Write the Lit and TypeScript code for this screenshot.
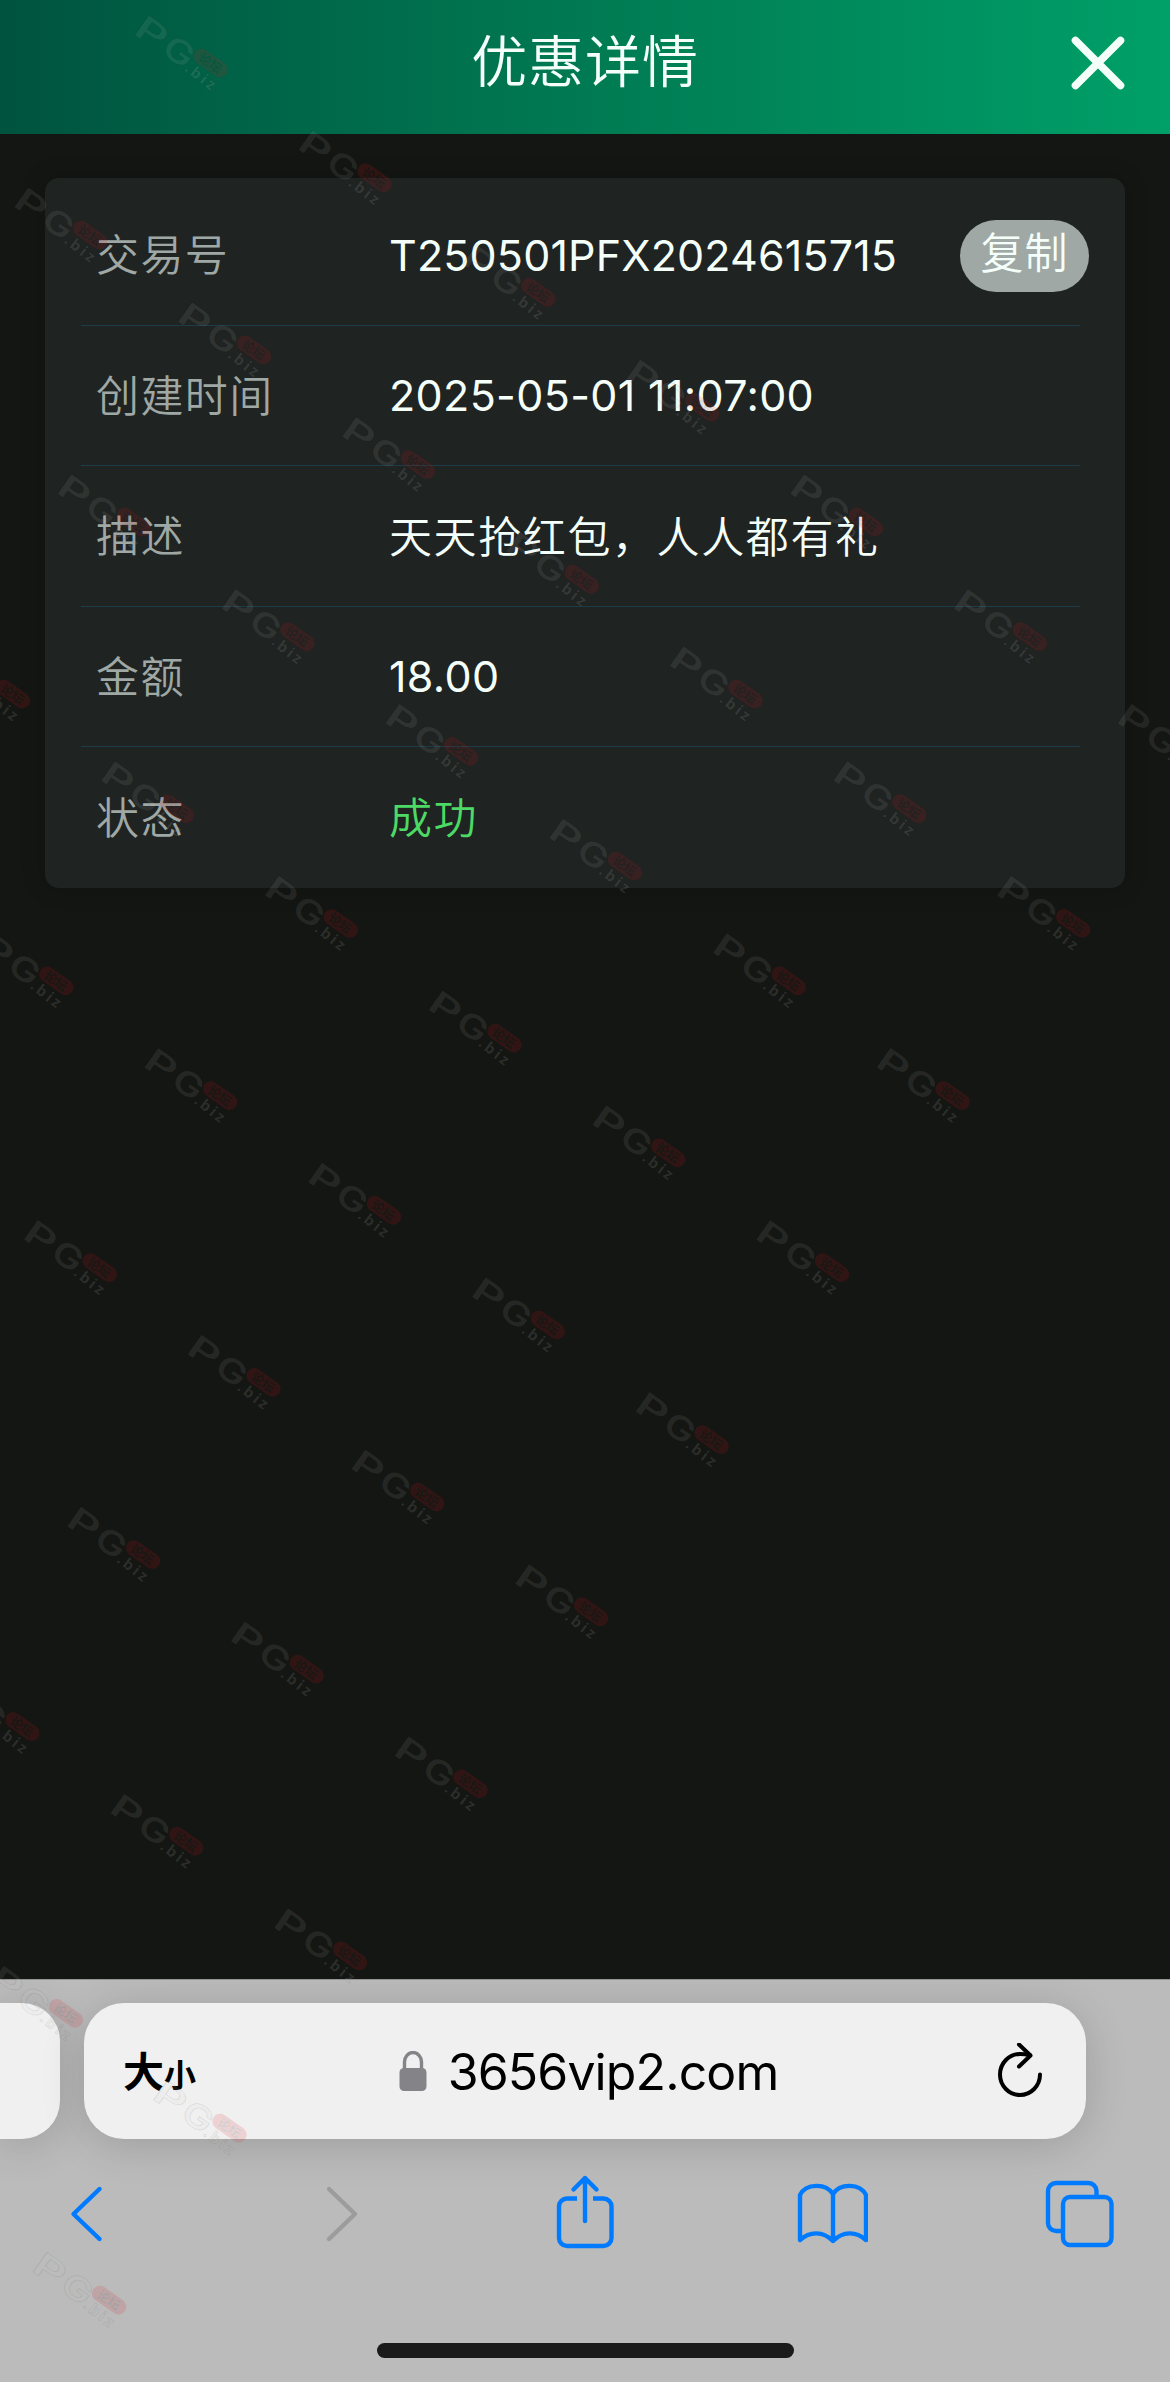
import { LitElement, html, svg, css } from "lit";
import { customElement, property } from "lit/decorators.js";
import { classMap } from "lit/directives/class-map.js";

interface DetailRow {
  label: string;
  value: string;
  kind: "code" | "number" | "text" | "success";
  copyable?: boolean;
}

const ROWS: DetailRow[] = [
  { label: "交易号", value: "T250501PFX2024615715", kind: "code", copyable: true },
  { label: "创建时间", value: "2025-05-01 11:07:00", kind: "number" },
  { label: "描述", value: "天天抢红包，人人都有礼", kind: "text" },
  { label: "金额", value: "18.00", kind: "number" },
  { label: "状态", value: "成功", kind: "success" },
];

/** Header with the page title and a close button. */
@customElement("page-header")
export class PageHeader extends LitElement {
  @property() heading = "";

  static styles = css`
    :host {
      display: grid;
      grid-template-columns: 1fr auto 1fr;
      align-items: center;
      height: 134px;
      padding-bottom: 9px;
      box-sizing: border-box;
      background: linear-gradient(90deg, #00533f 0%, #007a52 50%, #00a069 100%);
      color: #f5fffa;
      font-family: Inter, "Noto Sans CJK SC", sans-serif;
    }
    .title {
      grid-column: 2;
      margin: 0;
      padding-bottom: 2px;
      font-size: 56px;
      font-weight: 350;
      line-height: 80px;
      letter-spacing: 0.9px;
    }
    .close {
      justify-self: end;
      display: block;
      width: 56px;
      height: 56px;
      margin-right: 44px;
    }
  `;

  render() {
    return html`
      <h1 class="title">${this.heading}</h1>
      <svg class="close" viewBox="0 0 56 56" fill="none" stroke="#f5fffa" stroke-width="7.6" stroke-linecap="round">
        <path d="M5.5 5.5 50.5 50.5M50.5 5.5 5.5 50.5" />
      </svg>
    `;
  }
}

/** Card listing the fields of one record. */
@customElement("detail-card")
export class DetailCard extends LitElement {
  @property({ attribute: false }) rows: DetailRow[] = [];

  static styles = css`
    :host {
      display: block;
      height: 710px;
      box-sizing: border-box;
      padding: 7px 45px 0 36px;
      border-radius: 14px;
      background: #1f2322;
      box-shadow: 0 0 24px rgba(0, 0, 0, 0.18);
      font-family: Inter, "Noto Sans CJK SC", sans-serif;
      font-size: 43px;
    }
    .row {
      display: grid;
      grid-template-columns: 293px 1fr auto;
      align-items: center;
      height: 140.5px;
      box-sizing: border-box;
      padding-left: 15px;
      border-bottom: 1px solid #1d3b48;
    }
    .row:last-child {
      border-bottom: none;
    }
    .label {
      color: #9fa8a4;
      font-weight: 350;
      letter-spacing: 1.4px;
      padding-bottom: 5px;
    }
    .value {
      color: #f5fffa;
      font-weight: 380;
      white-space: nowrap;
    }
    .code {
      letter-spacing: 0.15px;
    }
    .number {
      letter-spacing: 0.35px;
    }
    .text,
    .success {
      font-weight: 350;
      letter-spacing: 1.6px;
      padding-bottom: 4px;
    }
    .success {
      color: #4cd964;
    }
    .copy {
      display: flex;
      justify-content: center;
      width: 129px;
      height: 72px;
      margin: 2px -9px 0 0;
      border-radius: 36px;
      background: #9fa8a4;
      color: #f5fffa;
      font-weight: 350;
      line-height: 66px;
      letter-spacing: 1px;
    }
  `;

  render() {
    return this.rows.map(
      (row) => html`
        <div class="row">
          <span class="label">${row.label}</span>
          <span class=${classMap({ value: true, [row.kind]: true })}>${row.value}</span>
          ${row.copyable ? html`<span class="copy">复制</span>` : null}
        </div>
      `
    );
  }
}

/** Mobile browser chrome: address bar, toolbar and home indicator. */
@customElement("browser-bar")
export class BrowserBar extends LitElement {
  @property() url = "";

  static styles = css`
    :host {
      display: flex;
      flex-direction: column;
      height: 403px;
      box-sizing: border-box;
      padding-top: 23px;
      border-top: 1px solid #959595;
      background: #bbbbbb;
      overflow: hidden;
      font-family: Inter, "Noto Sans CJK SC", sans-serif;
    }
    .strip {
      display: flex;
      gap: 24px;
      height: 136px;
    }
    .previous,
    .address {
      background: #f0f0f0;
      box-shadow: 0 6px 44px rgba(0, 0, 0, 0.16);
    }
    .previous {
      width: 60px;
      border-radius: 0 38px 38px 0;
    }
    .address {
      display: grid;
      grid-template-columns: 1fr auto 1fr;
      align-items: center;
      width: 1002px;
      box-sizing: border-box;
      padding: 0 42px 0 39px;
      border-radius: 40px;
      color: #000;
    }
    .sizes {
      display: flex;
      align-items: baseline;
      font-weight: 600;
      line-height: 60px;
      padding-top: 6px;
    }
    .big {
      font-size: 41px;
    }
    .small {
      font-size: 32px;
    }
    .site {
      display: flex;
      align-items: center;
      gap: 21px;
      padding: 2px 0 0 10px;
      font-size: 50px;
      font-weight: 380;
      line-height: 60px;
      letter-spacing: -0.9px;
    }
    .lock {
      display: block;
      width: 28px;
      height: 40px;
      margin-top: -3px;
    }
    .reload {
      justify-self: end;
      display: block;
      width: 48px;
      height: 56px;
    }
    .toolbar {
      display: flex;
      justify-content: space-between;
      padding: 35px 54px 0 50px;
    }
    .tool {
      display: block;
      width: 72px;
      height: 80px;
      fill: none;
      stroke: #007aff;
      stroke-width: 4.4;
      stroke-linecap: round;
      stroke-linejoin: round;
    }
    .disabled {
      stroke: #9c9c9c;
    }
    .butt {
      stroke-linecap: butt;
    }
    .home {
      align-self: center;
      width: 417px;
      height: 15px;
      margin-top: 89px;
      border-radius: 8px;
      background: #1a1a1a;
    }
  `;

  render() {
    return html`
      <div class="strip">
        <div class="previous"></div>
        <div class="address">
          <span class="sizes"><span class="big">大</span><span class="small">小</span></span>
          <span class="site">
            <svg class="lock" viewBox="0 0 28 40">
              <rect x="0.5" y="17" width="27" height="23" rx="4.5" fill="#848488" />
              <path d="M5.5 18V11a8.5 9.5 0 0 1 17 0v7" fill="none" stroke="#848488" stroke-width="3.4" />
            </svg>
            <span>${this.url}</span>
          </span>
          <svg class="reload" viewBox="0 0 48 56" fill="none" stroke="#000" stroke-width="4" stroke-linecap="round" stroke-linejoin="round">
            <path d="M44 31.500a20 20.500 0 1 1-20-20.500q5 0 10 1.300" />
            <path d="M23 1.500 34.500 12.500 23 23.500" />
          </svg>
        </div>
      </div>
      <div class="toolbar">
        <svg class="tool" viewBox="0 0 72 80"><path d="M49.500 15 23.500 40 49.500 65" /></svg>
        <svg class="tool disabled" viewBox="0 0 72 80"><path d="M30 15 56 40 30 65" /></svg>
        <svg class="tool" viewBox="0 0 72 80">
          <path class="butt" d="M30 24.500H20a8 8 0 0 0-8 8V64a8 8 0 0 0 8 8H56.500a8 8 0 0 0 8-8V32.500a8 8 0 0 0-8-8H46" />
          <path d="M38 47V4M26.500 15.500 38 4 49.500 15.500" />
        </svg>
        <svg class="tool" viewBox="0 0 72 80">
          <path d="M4 21C10 9 30 9 37 20 44 9 64 9 70 21V66C60 57 47 57 37 67 27 57 14 57 4 66ZM37 20V67" />
        </svg>
        <svg class="tool" viewBox="0 0 72 80">
          <path class="butt" d="M17 57H12a8 8 0 0 1-8-8V17a8 8 0 0 1 8-8H44.500a8 8 0 0 1 8 8V21" />
          <rect x="19" y="23" width="48.500" height="48" rx="7" />
        </svg>
      </div>
      <div class="home"></div>
    `;
  }
}

/** Faint repeating brand mark laid over the whole page. */
@customElement("brand-watermark")
export class BrandWatermark extends LitElement {
  static styles = css`
    :host {
      position: absolute;
      inset: 0;
      overflow: hidden;
      pointer-events: none;
    }
    .layer {
      display: block;
      width: 1170px;
      height: 2382px;
    }
    .letter,
    .domain {
      fill: rgba(205, 208, 206, 0.11);
      stroke: rgba(0, 0, 0, 0.08);
      stroke-width: 3;
      paint-order: stroke;
    }
    .letter {
      font: 600 99px Inter, sans-serif;
    }
    .domain {
      font: 700 46px "Open Sans", sans-serif;
      fill: rgba(205, 208, 206, 0.15);
    }
    .pill {
      fill: rgba(230, 20, 25, 0.14);
    }
    .forum {
      font: 700 38px "Noto Sans CJK SC", sans-serif;
      fill: rgba(60, 30, 30, 0.16);
    }
    .cut {
      font: 700 38px "Noto Sans CJK SC", sans-serif;
      fill: #000;
    }
  `;

  /** Marks sit on a skewed lattice; columns past the sixth are left empty. */
  private points(): Array<[number, number]> {
    const points: Array<[number, number]> = [];
    for (let j = 0; j <= 9; j++) {
      for (let i = 0; i <= 6; i++) {
        const x = 134 + i * 163.8 - j * 120.5;
        const y = 13 + i * 114.7 + j * 172.1;
        if (x > -96 && x < 1170) points.push([x, y]);
      }
    }
    return points;
  }

  render() {
    return html`
      <svg class="layer" viewBox="0 0 1170 2382">
        <defs>
          <mask id="forum-cut" maskUnits="userSpaceOnUse" x="250" y="-30" width="130" height="60">
            <rect x="250" y="-30" width="130" height="60" fill="#fff" />
            <text class="cut" x="273" y="14">论坛</text>
          </mask>
        </defs>
        ${this.points().map(
          ([x, y]) => svg`
            <g transform="translate(${x} ${y}) scale(0.3333) translate(-25 -28) rotate(35)">
              <text class="letter" transform="translate(66 61) scale(1.5 1)" x="0" y="0">P</text>
              <text class="letter" transform="translate(168 61) scale(1.24 1)" x="0" y="0">G</text>
              <rect class="pill" x="254" y="-24" width="115" height="47" rx="23.5" mask="url(#forum-cut)" />
              <text class="forum" x="273" y="14">论坛</text>
              <text class="domain" transform="translate(257 63) rotate(3)" x="0" y="0" textLength="102">.biz</text>
            </g>
          `
        )}
      </svg>
    `;
  }
}

@customElement("app-root")
export class AppRoot extends LitElement {
  static styles = css`
    :host {
      position: relative;
      display: flex;
      flex-direction: column;
      width: 1170px;
      height: 2382px;
      overflow: hidden;
      background: #141613;
    }
    .content {
      flex: 1;
      padding: 44px 45px 0;
    }
  `;

  render() {
    return html`
      <page-header heading="优惠详情"></page-header>
      <main class="content">
        <detail-card .rows=${ROWS}></detail-card>
      </main>
      <browser-bar url="3656vip2.com"></browser-bar>
      <brand-watermark></brand-watermark>
    `;
  }
}
